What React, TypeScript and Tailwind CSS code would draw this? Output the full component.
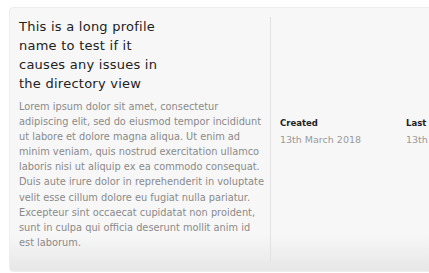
const bodyLines = [
  "Lorem ipsum dolor sit amet, consectetur",
  "adipiscing elit, sed do eiusmod tempor incididunt",
  "ut labore et dolore magna aliqua. Ut enim ad",
  "minim veniam, quis nostrud exercitation ullamco",
  "laboris nisi ut aliquip ex ea commodo consequat.",
  "Duis aute irure dolor in reprehenderit in voluptate",
  "velit esse cillum dolore eu fugiat nulla pariatur.",
  "Excepteur sint occaecat cupidatat non proident,",
  "sunt in culpa qui officia deserunt mollit anim id",
  "est laborum.",
];

const titleLines = [
  "This is a long profile",
  "name to test if it",
  "causes any issues in",
  "the directory view",
];

function Meta({ label, value }: { label: string; value: string }) {
  return (
    <div className="w-[126px] shrink-0 whitespace-nowrap">
      <div className="text-[8.5px] font-bold leading-[12px] text-[#222222]">{label}</div>
      <div className="mt-[5px] text-[9.5px] leading-[12px] text-[#9a9a9a]">{value}</div>
    </div>
  );
}

export default function App() {
  return (
    <div className="h-[273px] w-[429px] overflow-hidden bg-white pl-[9px] pt-[7px] font-['DejaVu_Sans',sans-serif]">
      <div className="flex h-[265px] w-[480px] rounded-[4px] border border-[#eeeeee] bg-[linear-gradient(to_bottom,#f7f7f7_86%,#e7e7e7)]">
        <div className="my-[9px] w-[261px] shrink-0 border-r border-[#e2e2e2] pl-[9px] pr-[3px]">
          <h2 className="text-[13px] leading-[19px] tracking-[0.25px] text-[#222222]">
            {titleLines.map((l) => (
              <div key={l} className="whitespace-nowrap">{l}</div>
            ))}
          </h2>
          <div className="mt-[6px] text-[9.8px] leading-[15.1px] text-[#8a8a8a]">
            {bodyLines.map((l) => (
              <div key={l} className="whitespace-nowrap">{l}</div>
            ))}
          </div>
        </div>
        <div className="flex items-center pb-[16px] pl-[9px]">
          <Meta label="Created" value="13th March 2018" />
          <Meta label="Last updated" value="13th March 2018" />
        </div>
      </div>
    </div>
  );
}
